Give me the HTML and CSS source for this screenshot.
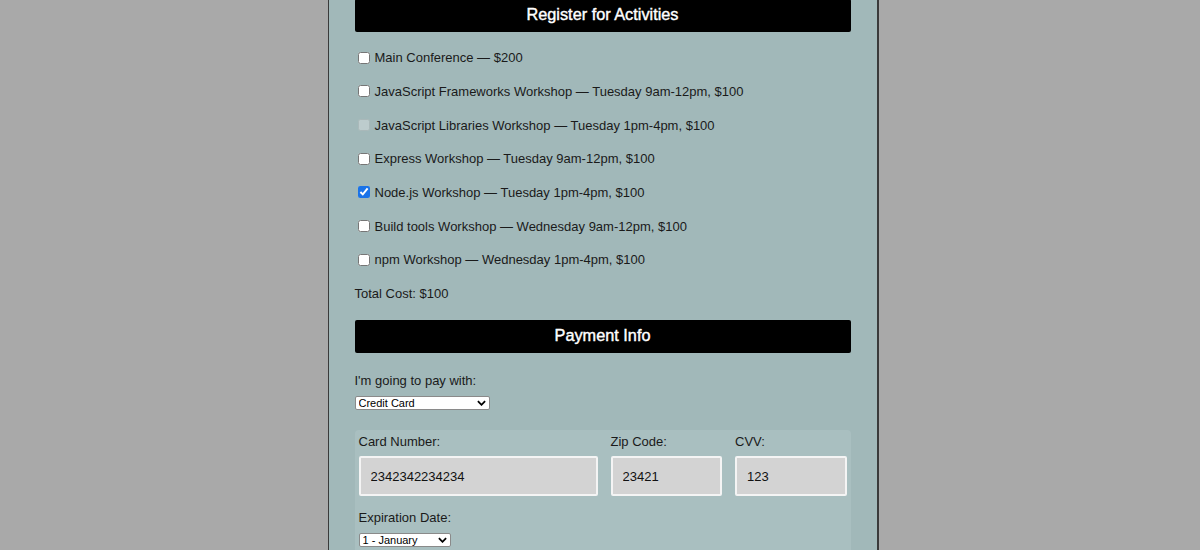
FILE: index.html
```html
<!DOCTYPE html>
<html>
<head>
<meta charset="UTF-8">
<meta name="viewport" content="width=device-width, initial-scale=1.0"/>
<title>Register</title>
<link rel="stylesheet" href="styles.css">
</head>
<body>
<div id="container">

<fieldset class="activities">
<h2>Register for Activities</h2>
<label><input type="checkbox" name="all">Main Conference — $200</label>
<label><input type="checkbox" name="js-frameworks">JavaScript Frameworks Workshop — Tuesday 9am-12pm, $100</label>
<label class="off"><input type="checkbox" name="js-libs" disabled>JavaScript Libraries Workshop — Tuesday 1pm-4pm, $100</label>
<label><input type="checkbox" name="express">Express Workshop — Tuesday 9am-12pm, $100</label>
<label><input type="checkbox" name="node" checked>Node.js Workshop — Tuesday 1pm-4pm, $100</label>
<label><input type="checkbox" name="build-tools">Build tools Workshop — Wednesday 9am-12pm, $100</label>
<label><input type="checkbox" name="npm">npm Workshop — Wednesday 1pm-4pm, $100</label>
<p class="total">Total Cost: $100</p>
</fieldset>

<fieldset class="payment">
<h2>Payment Info</h2>
<p class="pay-label">I'm going to pay with:</p>
<span class="select wide">
<select id="payment">
<option>Credit Card</option>
<option>PayPal</option>
<option>Bitcoin</option>
</select>
<svg viewBox="0 0 10 6"><path d="M1 1l4 4l4-4"/></svg>
</span>

<div class="card">
<div class="field">
<label for="cc-num">Card Number:</label>
<input id="cc-num" type="text" value="2342342234234">
</div>
<div class="field">
<label for="zip">Zip Code:</label>
<input id="zip" type="text" value="23421">
</div>
<div class="field">
<label for="cvv">CVV:</label>
<input id="cvv" type="text" value="123">
</div>
<div class="exp">
<label for="exp-month">Expiration Date:</label>
<span class="select month">
<select id="exp-month">
<option>1 - January</option>
<option>2 - February</option>
<option>3 - March</option>
</select>
<svg viewBox="0 0 10 6"><path d="M1 1l4 4l4-4"/></svg>
</span>
</div>
</div>
</fieldset>

</div>
</body>
</html>
```

FILE: styles.css
```css
*{
box-sizing: border-box;
margin:0; padding:0;
}

body{
background: #a9a9a9;
font-family: "Liberation Sans", Arial, sans-serif;
font-size: 13px;
color: #1a1a1a;
display: flex;
justify-content: center;
padding-left: 6px;
}

#container{
width: 551px;
min-height: 600px;
margin-top: -1px;
padding: 0 26px;
background: #a1b8b9;
border-left: 1px solid #3a3a3a;
border-right: 2px solid #3a3a3a;
}

fieldset{
border: none;
}

h2{
background: #000;
color: #fff;
height: 33px;
line-height: 31px;
padding-bottom: 2px;
font-size: 16.3px;
font-weight: normal;
-webkit-text-stroke: 0.4px #fff;
text-align: center;
border-radius: 2px;
}

/*---------*/
.activities h2{
margin-bottom: 9px;
}

.activities label, .total{
display: flex;
align-items: center;
height: 33.67px;
}

.activities input{
width: 12px; height: 12px;
margin: 0 5px 0 3px;
accent-color: #1a73e8;
}

.off input{
opacity: .5;
}

.total{
margin-bottom: 10px;
}

/*---------*/
.pay-label{
margin: 20px 0 8px;
line-height: 15px;
}

.select{
position: relative;
display: inline-block;
vertical-align: top;
}

.select select{
appearance: none;
display: block;
height: 14px;
font: 11px "Liberation Sans", Arial, sans-serif;
color: #000;
background: #fff;
border: 1px solid #8a8a8a;
border-radius: 2px;
padding: 0 0 0 3px;
line-height: 12px;
}

.select svg{
position: absolute;
right: 4px; top: 4px;
width: 9px; height: 6px;
fill: none;
stroke: #000;
stroke-width: 2;
pointer-events: none;
}

.wide select{ width: 135px; }
.month select{ width: 92px; }

.card{
margin-top: 19px;
background: #a9bfc0;
border-radius: 4px;
padding: 4px 4px 20px;
display: grid;
grid-template-columns: 239px 1fr 1fr;
column-gap: 13px;
}

.field label, .exp label{
display: block;
line-height: 15px;
margin-bottom: 7px;
}

.field input{
width: 100%;
height: 40px;
background: #d3d3d3;
border: 2px solid #f4f4f4;
border-radius: 2px;
padding: 0 10px;
font: 13px "Liberation Sans", Arial, sans-serif;
color: #111;
outline: none;
}

.exp{
grid-column: 1 / -1;
margin-top: 14px;
}

.exp label{
margin-bottom: 8px;
}
```
